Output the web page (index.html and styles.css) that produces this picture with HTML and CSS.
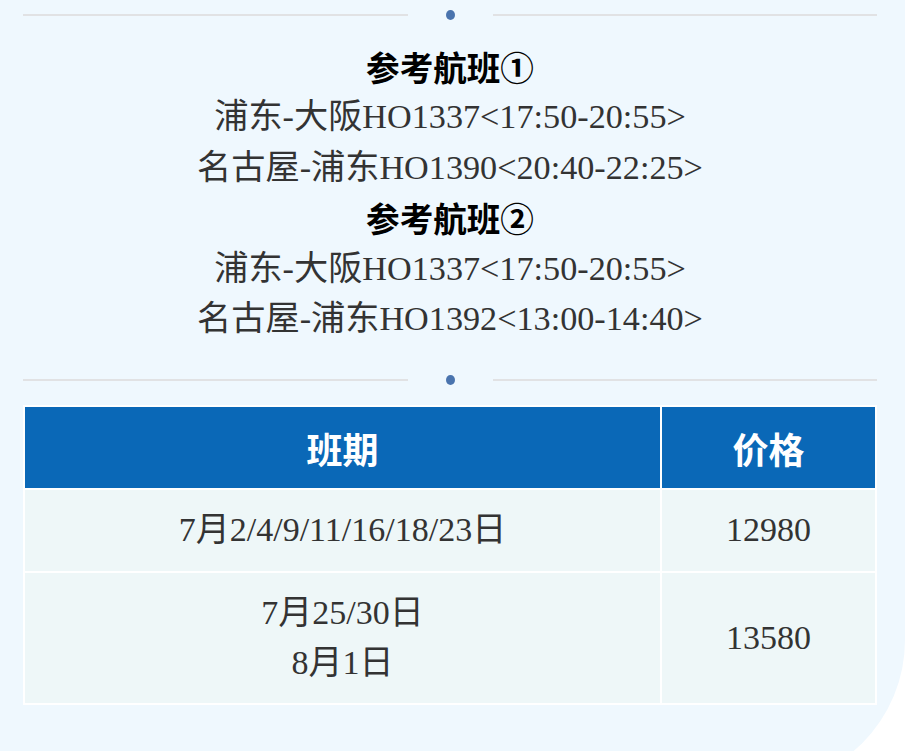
FILE: index.html
```html
<!DOCTYPE html>
<html lang="zh-CN">
<head>
<meta charset="utf-8">
<title>参考航班</title>
<link rel="stylesheet" href="styles.css">
</head>
<body>
<div class="page">
  <div class="divider"><span class="line"></span><span class="dot"></span><span class="line"></span></div>
  <div class="flights">
    <p class="title">参考航班①</p>
    <p>浦东-大阪HO1337&lt;17:50-20:55&gt;</p>
    <p>名古屋-浦东HO1390&lt;20:40-22:25&gt;</p>
    <p class="title">参考航班②</p>
    <p>浦东-大阪HO1337&lt;17:50-20:55&gt;</p>
    <p>名古屋-浦东HO1392&lt;13:00-14:40&gt;</p>
  </div>
  <div class="divider divider-lower"><span class="line"></span><span class="dot"></span><span class="line"></span></div>
  <table class="schedule">
    <thead>
      <tr><th class="col-date">班期</th><th class="col-price">价格</th></tr>
    </thead>
    <tbody>
      <tr><td>7月2/4/9/11/16/18/23日</td><td>12980</td></tr>
      <tr><td>7月25/30日<br>8月1日</td><td>13580</td></tr>
    </tbody>
  </table>
</div>
</body>
</html>
```

FILE: styles.css
```css
html, body {
  margin: 0;
  padding: 0;
  background: #ffffff;
  overflow: hidden;
}

.page {
  width: 905px;
  height: 786px;
  box-sizing: border-box;
  padding: 10px 28px 0 23px;
  background: #eff8fe;
  border-bottom-right-radius: 146px;
  font-family: "Liberation Serif", "Noto Sans CJK SC", serif;
  color: #333333;
}

.divider {
  display: flex;
  align-items: center;
  height: 10px;
}

.divider .line {
  flex: 1;
  height: 2px;
  background: #e1e2e4;
}

.divider .dot {
  width: 9px;
  height: 10px;
  border-radius: 50%;
  background: #4a74ae;
  margin: 0 38px;
}

.divider-lower {
  margin-top: 31px;
}

.flights {
  margin-top: 22px;
  text-align: center;
  font-size: 34.2px;
  line-height: 50.4px;
}

.flights p {
  margin: 0;
}

.flights .title {
  font-family: "Noto Sans CJK SC", sans-serif;
  font-weight: 700;
  font-size: 33.6px;
  color: #000000;
}

.schedule {
  margin-top: 20px;
  width: 854px;
  border-collapse: separate;
  border-spacing: 2px;
  background: #ffffff;
  font-size: 34px;
  line-height: 50.4px;
}

.schedule th {
  background: #0a68b7;
  color: #ffffff;
  font-family: "Noto Sans CJK SC", sans-serif;
  font-weight: 700;
  font-size: 36px;
  line-height: 50.4px;
  padding: 15.2px 0;
  text-align: center;
}

.schedule .col-date {
  width: 635px;
}

.schedule td {
  background: #eef7f8;
  color: #333333;
  text-align: center;
  vertical-align: middle;
  padding: 15px 0;
}
```
